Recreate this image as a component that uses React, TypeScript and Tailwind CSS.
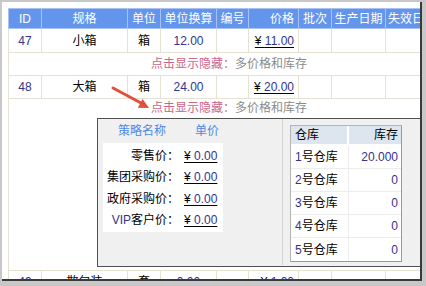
export default function App() {
  const num = "text-[#33338c]";
  const bd = "border border-[#e6e2d2]";
  const hd = "border border-[#a8c2f4] bg-[#6495ed] text-white font-normal p-0";
  const prices = ["零售价：", "集团采购价：", "政府采购价：", "VIP客户价："];
  const stores = [
    ["1号仓库", "20.000"],
    ["2号仓库", "0"],
    ["3号仓库", "0"],
    ["4号仓库", "0"],
    ["5号仓库", "0"],
  ];
  return (
    <div className="relative w-[426px] h-[286px] bg-[#c8c8c8] pt-[2px] pl-[2px] font-[Liberation_Sans,Noto_Sans_CJK_SC,sans-serif] text-[12px] text-black overflow-hidden">
      <div className="w-[420px] h-[279px] bg-white border-r-2 border-b-2 border-[#3a3a3a] overflow-hidden pt-[6px] pl-[6px]">
        <table className="border-collapse table-fixed w-[520px] leading-none">
          <colgroup>
            <col className="w-[33px]" />
            <col className="w-[86px]" />
            <col className="w-[33px]" />
            <col className="w-[56px]" />
            <col className="w-[32px]" />
            <col className="w-[50px]" />
            <col className="w-[33px]" />
            <col className="w-[54px]" />
            <col className="w-[143px]" />
          </colgroup>
          <thead>
            <tr className="h-[20px]">
              <th className={`${hd} text-center`}>ID</th>
              <th className={`${hd} text-center`}>规格</th>
              <th className={`${hd} text-center`}>单位</th>
              <th className={`${hd} text-center`}>单位换算</th>
              <th className={`${hd} text-center`}>编号</th>
              <th className={`${hd} text-right pr-[4px]`}>价格</th>
              <th className={`${hd} text-center`}>批次</th>
              <th className={`${hd} text-center`}>生产日期</th>
              <th className={`${hd} text-left pl-[2px]`}>失效日期</th>
            </tr>
          </thead>
          <tbody>
            <tr className="h-[24px]">
              <td className={`${bd} text-center ${num}`}>47</td>
              <td className={`${bd} text-center`}>小箱</td>
              <td className={`${bd} text-center`}>箱</td>
              <td className={`${bd} text-center ${num}`}>12.00</td>
              <td className={bd}></td>
              <td className={`${bd} text-right pr-[4px]`}>
                <span className="underline underline-offset-2">¥ <span className={num}>11.00</span></span>
              </td>
              <td className={bd}></td>
              <td className={bd}></td>
              <td className={bd}></td>
            </tr>
            <tr className="h-[23px]">
              <td colSpan={9} className={`${bd} pl-[142px]`}>
                <span className="text-[#cc6688]">点击显示隐藏：</span>
                <span className="text-[#8a8a8a]">多价格和库存</span>
              </td>
            </tr>
            <tr className="h-[23px]">
              <td className={`${bd} text-center ${num}`}>48</td>
              <td className={`${bd} text-center`}>大箱</td>
              <td className={`${bd} text-center`}>箱</td>
              <td className={`${bd} text-center ${num}`}>24.00</td>
              <td className={bd}></td>
              <td className={`${bd} text-right pr-[4px]`}>
                <span className="underline underline-offset-2">¥ <span className={num}>20.00</span></span>
              </td>
              <td className={bd}></td>
              <td className={bd}></td>
              <td className={bd}></td>
            </tr>
            <tr>
              <td colSpan={9} className={`${bd} p-0 h-[172px] align-top`}>
                <div className="h-[19px] leading-[19px] pl-[142px]">
                  <span className="text-[#cc6688]">点击显示隐藏：</span>
                  <span className="text-[#8a8a8a]">多价格和库存</span>
                </div>
                <div className="ml-[88px] w-[400px] h-[149px] border border-[#505050] bg-[#f0f0f0] flex">
                  <div className="w-[185px] h-[146px] border-r border-[#d4d4d4] pl-[5px]">
                    <div className="w-[120px]">
                      <div className="flex h-[24px] items-center text-[#4a8ae6]">
                        <div className="w-[78px] text-center">策略名称</div>
                        <div className="flex-1 text-right pr-[4px]">单价</div>
                      </div>
                      <div className="bg-white h-[89px] pt-[2px]">
                        {prices.map((p) => (
                          <div key={p} className="flex h-[21.5px] items-center">
                            <div className="w-[76px] text-right">
                              {p.startsWith("VIP") ? (
                                <>
                                  <span className={num}>VIP</span>客户价：
                                </>
                              ) : (
                                p
                              )}
                            </div>
                            <div className="pl-[5px]">
                              <span className="underline underline-offset-2">¥ <span className={num}>0.00</span></span>
                            </div>
                          </div>
                        ))}
                      </div>
                    </div>
                  </div>
                  <div className="pl-[7px] pt-[6px]">
                    <div className="w-[112px] border border-[#b4b4b4] border-r-[#9a9a9a] border-b-[#9a9a9a] bg-white">
                      <div className="flex h-[20px] items-center bg-[#dde5ef] border-b-2 border-white">
                        <div className="w-[58px] pl-[4px] h-full flex items-center border-r-2 border-white">仓库</div>
                        <div className="flex-1 text-right pr-[3px]">库存</div>
                      </div>
                      {stores.map(([n, v], i) => (
                        <div
                          key={n}
                          className={`flex h-[23px] items-center ${i < 4 ? "border-b border-[#ececec]" : ""}`}
                        >
                          <div className="w-[58px] pl-[4px] h-full flex items-center border-r border-[#ececec]">
                            <span className={num}>{n[0]}</span>
                            {n.slice(1)}
                          </div>
                          <div className={`flex-1 text-right pr-[3px] ${num}`}>{v}</div>
                        </div>
                      ))}
                    </div>
                  </div>
                </div>
              </td>
            </tr>
            <tr className="h-[23px]">
              <td className={`${bd} text-center ${num}`}>49</td>
              <td className={`${bd} text-center`}>散包装</td>
              <td className={`${bd} text-center`}>套</td>
              <td className={`${bd} text-center ${num}`}>0.00</td>
              <td className={bd}></td>
              <td className={`${bd} text-right pr-[4px]`}>
                <span className="underline underline-offset-2">¥ <span className={num}>1.00</span></span>
              </td>
              <td className={bd}></td>
              <td className={bd}></td>
              <td className={bd}></td>
            </tr>
          </tbody>
        </table>
      </div>
      <svg className="absolute left-[105px] top-[82px]" width="50" height="32" viewBox="0 0 50 32">
        <line x1="8" y1="6" x2="36" y2="21" stroke="#e0503c" strokeWidth="3" strokeLinecap="round" />
        <polygon points="44,26 32.8,25.7 37.6,16.9" fill="#e0503c" />
      </svg>
    </div>
  );
}
